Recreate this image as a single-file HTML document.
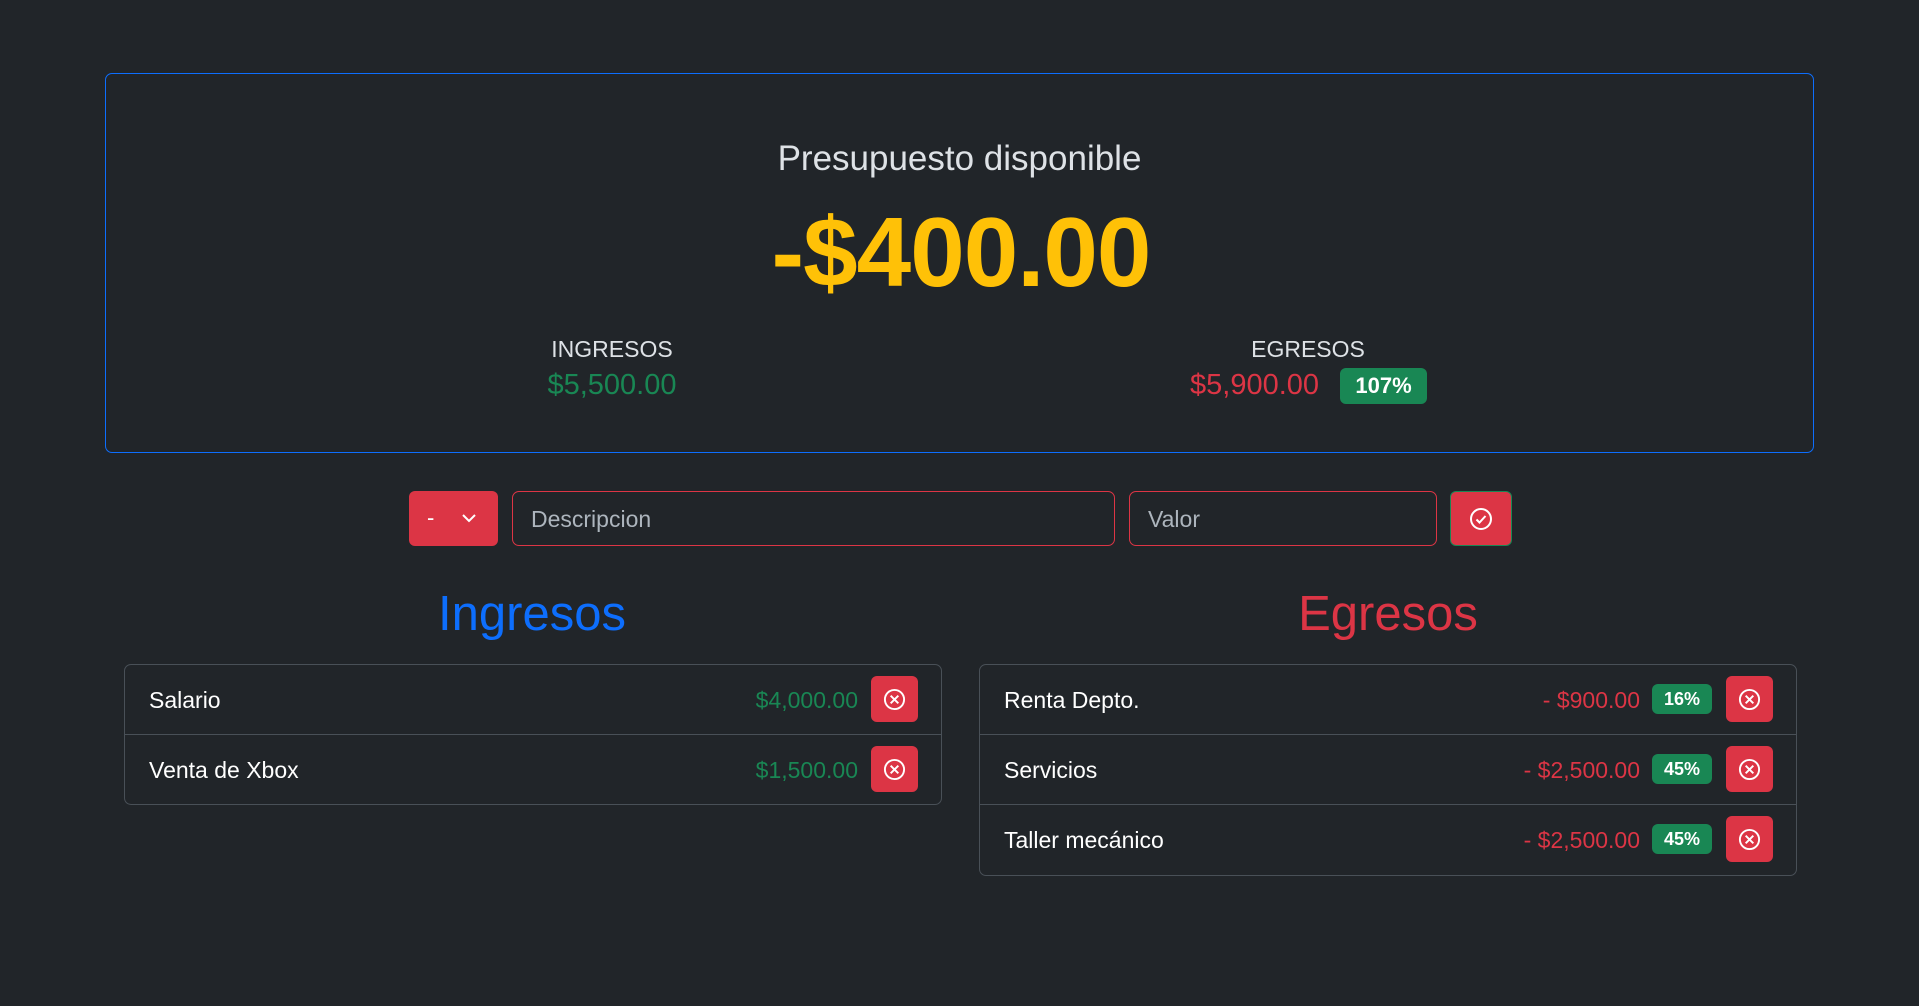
<!DOCTYPE html>
<html><head><meta charset="utf-8"><style>
*{box-sizing:border-box;margin:0;padding:0}
body{width:1919px;height:1006px;background:#212529;font-family:"Liberation Sans",sans-serif;color:#dee2e6;position:relative;overflow:hidden}
.a{position:absolute}
.c{text-align:center}
.card{left:105px;top:73px;width:1709px;height:380px;border:1px solid #0d6efd;border-radius:7px}
.inp{border:1px solid #dc3545;border-radius:7px;height:55px;top:491px;font-size:23px;color:#adb5bd;padding:14px 18px}
.btn{background:#dc3545;border-radius:6px}
.list{border:1px solid #495057;border-radius:7px}
.row{position:absolute;left:0;right:0;height:70px;border-bottom:1px solid #495057}
.row:last-child{border-bottom:none}
.lbl{position:absolute;left:24px;top:22px;font-size:23px;color:#fff}
.amt{position:absolute;top:22px;font-size:23px}
.del{position:absolute;width:47px;height:46px;top:11px;background:#dc3545;border-radius:6px}
.del svg{position:absolute;left:12px;top:12px}
.bdg{position:absolute;top:19px;width:60px;height:30px;background:#198754;border-radius:6px;color:#fff;font-weight:bold;font-size:18px;text-align:center;line-height:30px}
</style></head><body>
<div class="a card"></div>
<div class="a c" style="left:0;width:1919px;top:139px;font-size:35px">Presupuesto disponible</div>
<div class="a c" style="left:0;width:1922px;top:196px;font-size:98px;font-weight:bold;color:#ffc107;letter-spacing:-1px">-$400.00</div>
<div class="a c" style="left:512px;width:200px;top:336px;font-size:23px">INGRESOS</div>
<div class="a c" style="left:512px;width:200px;top:369px;font-size:29px;color:#198754">$5,500.00</div>
<div class="a c" style="left:1208px;width:200px;top:336px;font-size:23px">EGRESOS</div>
<div class="a" style="left:1190px;top:369px;font-size:29px;color:#dc3545">$5,900.00</div>
<div class="a" style="left:1340px;top:368px;width:87px;height:36px;background:#198754;border-radius:6px;color:#fff;font-weight:bold;font-size:22px;text-align:center;line-height:36px">107%</div>

<div class="a btn" style="left:409px;top:491px;width:89px;height:55px">
<span class="a" style="left:18px;top:14px;color:#fff;font-size:22px">-</span>
<svg class="a" style="left:52px;top:22px" width="16" height="10" viewBox="0 0 16 10"><path d="M2 2l6 6 6-6" stroke="#fff" stroke-width="2" fill="none"/></svg></div>
<div class="a inp" style="left:512px;width:603px">Descripcion</div>
<div class="a inp" style="left:1129px;width:308px">Valor</div>
<div class="a btn" style="left:1450px;top:491px;width:62px;height:55px;border:1px solid #198754">
<svg class="a" style="left:18px;top:15px" width="24" height="24" viewBox="0 0 24 24"><circle cx="12" cy="12" r="10" stroke="#fff" stroke-width="2" fill="none"/><path d="M7.5 12.5l3 3 6-6.5" stroke="#fff" stroke-width="2" fill="none"/></svg></div>

<div class="a c" style="left:332px;width:400px;top:586px;font-size:49px;color:#0d6efd">Ingresos</div>
<div class="a c" style="left:1188px;width:400px;top:586px;font-size:49px;color:#dc3545">Egresos</div>

<div class="a list" style="left:124px;top:664px;width:818px;height:141px">
<div class="row" style="top:0"><span class="lbl">Salario</span><span class="amt" style="right:83px;color:#198754">$4,000.00</span><div class="del" style="right:23px"><svg width="23" height="23" viewBox="0 0 24 24"><circle cx="12" cy="12" r="10" stroke="#fff" stroke-width="2" fill="none"/><path d="M8 8l8 8M16 8l-8 8" stroke="#fff" stroke-width="2"/></svg></div></div>
<div class="row" style="top:70px"><span class="lbl">Venta de Xbox</span><span class="amt" style="right:83px;color:#198754">$1,500.00</span><div class="del" style="right:23px"><svg width="23" height="23" viewBox="0 0 24 24"><circle cx="12" cy="12" r="10" stroke="#fff" stroke-width="2" fill="none"/><path d="M8 8l8 8M16 8l-8 8" stroke="#fff" stroke-width="2"/></svg></div></div>
</div>

<div class="a list" style="left:979px;top:664px;width:818px;height:212px">
<div class="row" style="top:0"><span class="lbl">Renta Depto.</span><span class="amt" style="right:156px;color:#dc3545">- $900.00</span><div class="bdg" style="right:84px">16%</div><div class="del" style="right:23px"><svg width="23" height="23" viewBox="0 0 24 24"><circle cx="12" cy="12" r="10" stroke="#fff" stroke-width="2" fill="none"/><path d="M8 8l8 8M16 8l-8 8" stroke="#fff" stroke-width="2"/></svg></div></div>
<div class="row" style="top:70px"><span class="lbl">Servicios</span><span class="amt" style="right:156px;color:#dc3545">- $2,500.00</span><div class="bdg" style="right:84px">45%</div><div class="del" style="right:23px"><svg width="23" height="23" viewBox="0 0 24 24"><circle cx="12" cy="12" r="10" stroke="#fff" stroke-width="2" fill="none"/><path d="M8 8l8 8M16 8l-8 8" stroke="#fff" stroke-width="2"/></svg></div></div>
<div class="row" style="top:140px"><span class="lbl">Taller mecánico</span><span class="amt" style="right:156px;color:#dc3545">- $2,500.00</span><div class="bdg" style="right:84px">45%</div><div class="del" style="right:23px"><svg width="23" height="23" viewBox="0 0 24 24"><circle cx="12" cy="12" r="10" stroke="#fff" stroke-width="2" fill="none"/><path d="M8 8l8 8M16 8l-8 8" stroke="#fff" stroke-width="2"/></svg></div></div>
</div>
</body></html>
